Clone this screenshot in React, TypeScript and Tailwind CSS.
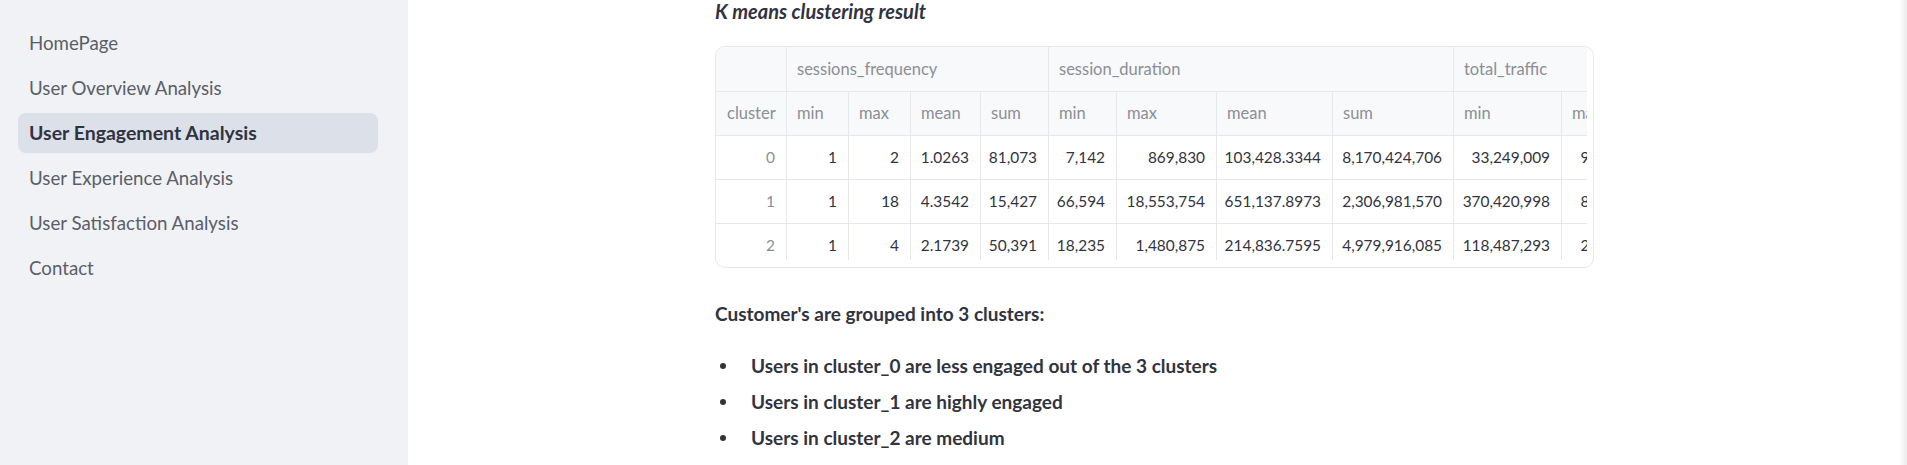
import React from "react";

const font = { fontFamily: "Lato, 'Noto Sans', sans-serif" };

const navItems = [
  "HomePage",
  "User Overview Analysis",
  "User Engagement Analysis",
  "User Experience Analysis",
  "User Satisfaction Analysis",
  "Contact",
];

const cols = "grid grid-cols-[71px_62px_62px_70px_68px_68px_100px_116px_121px_108px_100px]";

const rows = [
  ["0", "1", "2", "1.0263", "81,073", "7,142", "869,830", "103,428.3344", "8,170,424,706", "33,249,009", "9,999,999"],
  ["1", "1", "18", "4.3542", "15,427", "66,594", "18,553,754", "651,137.8973", "2,306,981,570", "370,420,998", "8,888,888"],
  ["2", "1", "4", "2.1739", "50,391", "18,235", "1,480,875", "214,836.7595", "4,979,916,085", "118,487,293", "2,555,555"],
];

const subHeads = ["min", "max", "mean", "sum", "min", "max", "mean", "sum", "min", "max"];

function Sidebar() {
  return (
    <aside className="w-[408px] shrink-0 h-[465px] bg-[#f0f2f6] pt-[23px]">
      <nav className="flex flex-col gap-[5px] pl-[18px] pr-[30px]">
        {navItems.map((item) => {
          const active = item === "User Engagement Analysis";
          return (
            <div
              key={item}
              className={`h-10 flex items-center pl-[11px] rounded-lg ${
                active ? "bg-[#dbe0e9] font-bold text-[19.5px] text-[#31333f]" : "text-[18.7px] text-[#5b5e69]"
              }`}
            >
              {item}
            </div>
          );
        })}
      </nav>
    </aside>
  );
}

function ClusterTable() {
  return (
    <div className="w-[879px] h-[222px] border border-[#e6e8ed] rounded-[10px] overflow-hidden bg-white">
      <div className="w-[871px] h-[213px] overflow-hidden text-[15.4px]">
        <div className="w-max">
          <div className={`${cols} h-[45px] bg-[#f8f9fb] text-[#8c8e96] text-[16.5px] border-b border-[#e6e8ed]`}>
            <div className="border-r border-[#e6e8ed]" />
            <div className="col-span-4 flex items-center pl-[10px] border-r border-[#e6e8ed]">sessions_frequency</div>
            <div className="col-span-4 flex items-center pl-[10px] border-r border-[#e6e8ed]">session_duration</div>
            <div className="col-span-2 flex items-center pl-[10px]">total_traffic</div>
          </div>
          <div className={`${cols} h-[44px] bg-[#f8f9fb] text-[#8c8e96] text-[16.5px] border-b border-[#e6e8ed]`}>
            <div className="flex items-center pl-[11px] border-r border-[#e6e8ed]">cluster</div>
            {subHeads.map((h, i) => (
              <div key={i} className="flex items-center pl-[10px] border-r border-[#e6e8ed]">
                {h}
              </div>
            ))}
          </div>
          {rows.map((r) => (
            <div key={r[0]} className={`${cols} h-[44px] border-b border-[#e6e8ed]`}>
              {r.map((v, i) => (
                <div
                  key={i}
                  className={`flex items-center justify-end pr-[11px] border-r border-[#e6e8ed] ${
                    i === 0 ? "text-[#8c8e96]" : "text-[#31333f]"
                  }`}
                >
                  {v}
                </div>
              ))}
            </div>
          ))}
        </div>
      </div>
    </div>
  );
}

export default function App() {
  return (
    <div className="flex w-[1907px] h-[465px] overflow-hidden bg-white" style={font}>
      <Sidebar />
      <main className="flex-1 pl-[307px] text-[#31333f]">
        <h3 className="italic font-bold text-[20px] leading-6 mt-[-1px]">K means clustering result</h3>
        <div className="mt-[23px]">
          <ClusterTable />
        </div>
        <p className="mt-[32px] font-bold text-[19px] leading-7">Customer's are grouped into 3 clusters:</p>
        <ul className="mt-[20px]">
          {[
            "Users in cluster_0 are less engaged out of the 3 clusters",
            "Users in cluster_1 are highly engaged",
            "Users in cluster_2 are medium",
          ].map((t) => (
            <li key={t} className="h-9 flex items-center font-bold text-[19px]">
              <span className="w-[6px] h-[6px] rounded-full bg-[#31333f] ml-[5px] mr-[25px]" />
              {t}
            </li>
          ))}
        </ul>
      </main>
      <div className="w-[8px] shrink-0 bg-gradient-to-r from-white to-[#ebebeb]" />
    </div>
  );
}
